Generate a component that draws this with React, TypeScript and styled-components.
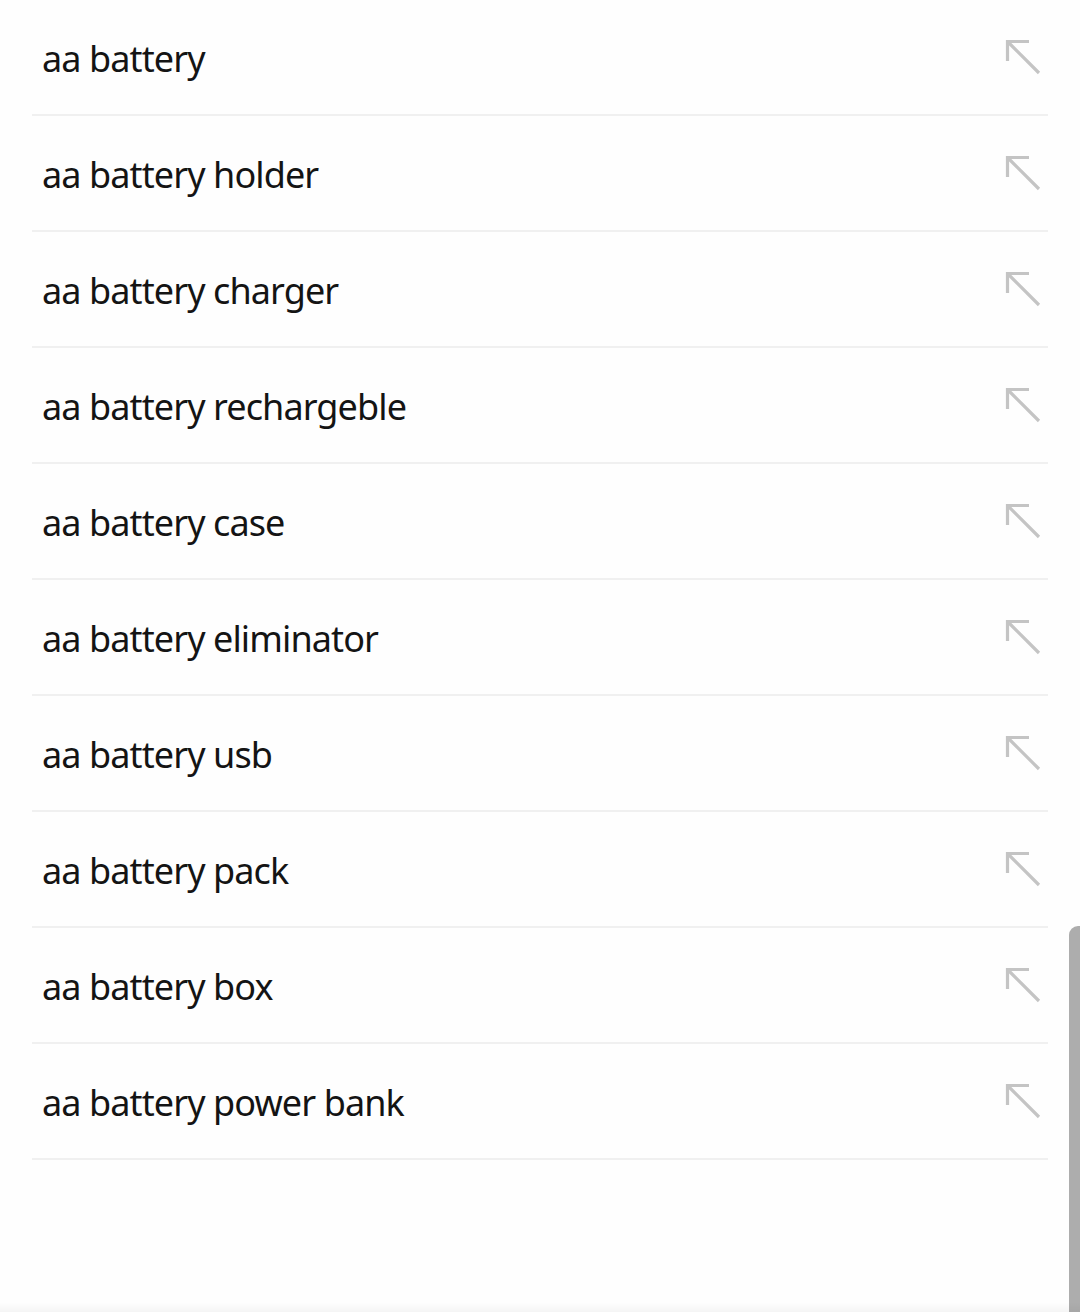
import React from "react";
import styled, { createGlobalStyle } from "styled-components";

const Global = createGlobalStyle`
  html, body { margin: 0; padding: 0; background: #fefefe; }
  body { font-family: "Noto Sans", "Open Sans", sans-serif; }
`;

const Page = styled.div`
  position: relative;
  width: 1080px;
  height: 1312px;
  overflow: hidden;
  background: #fefefe;
`;

const List = styled.ul`
  list-style: none;
  margin: 0;
  padding: 0 32px;
  display: flex;
  flex-direction: column;
`;

const Row = styled.li`
  height: 114px;
  display: flex;
  align-items: center;
  justify-content: space-between;
  padding: 0 6px 0 10px;
  border-bottom: 2px solid #f0f0f0;
`;

const Label = styled.span`
  font-family: "Noto Sans", sans-serif;
  font-size: 36px;
  letter-spacing: -0.9px;
  color: #141414;
  padding-top: 2px;
`;

const Scrollbar = styled.div`
  position: absolute;
  right: 0;
  top: 926px;
  bottom: 0;
  width: 11px;
  background: #adadad;
  border-top-left-radius: 9px;
`;

const BottomShade = styled.div`
  position: absolute;
  left: 0;
  right: 0;
  bottom: 0;
  height: 10px;
  background: linear-gradient(to bottom, rgba(0,0,0,0), rgba(0,0,0,0.04));
`;

const ArrowIcon = () => (
  <svg width="38" height="40" viewBox="0 0 38 40" fill="none">
    <path
      d="M3.5 24 V4.5 H25 M3.5 4.5 L35 36"
      stroke="#c4c4c4"
      strokeWidth="3.2"
    />
  </svg>
);

const items = [
  "aa battery",
  "aa battery holder",
  "aa battery charger",
  "aa battery rechargeble",
  "aa battery case",
  "aa battery eliminator",
  "aa battery usb",
  "aa battery pack",
  "aa battery box",
  "aa battery power bank",
];

export default function App() {
  return (
    <Page>
      <Global />
      <List>
        {items.map((t) => (
          <Row key={t}>
            <Label>{t}</Label>
            <ArrowIcon />
          </Row>
        ))}
      </List>
      <Scrollbar />
      <BottomShade />
    </Page>
  );
}
